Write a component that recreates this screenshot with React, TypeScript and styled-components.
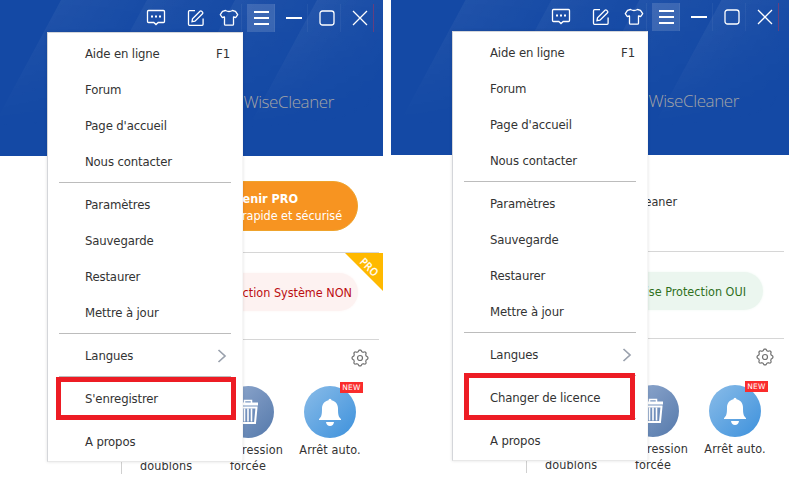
import React from "react";
import styled, { createGlobalStyle } from "styled-components";

const GlobalStyle = createGlobalStyle`
  * {
    box-sizing: border-box;
  }
  body {
    margin: 0;
    background: #fff;
    color: #333;
    font-family: "DejaVu Sans Condensed", "DejaVu Sans", sans-serif;
    font-stretch: condensed;
    font-size: 12.5px;
    overflow: hidden;
  }
`;

const Page = styled.div`
  display: flex;
  gap: 8px;
  width: 790px;
  height: 480px;
  overflow: hidden;
`;

const Window = styled.div<{ $shift?: boolean }>`
  position: relative;
  flex: none;
  width: ${({ $shift }) => ($shift ? 398 : 383)}px;
  height: 480px;
  overflow: hidden;
`;

const Frame = styled.div<{ $shift?: boolean }>`
  position: relative;
  width: 383px;
  margin-top: ${({ $shift }) => ($shift ? -1 : 0)}px;
  margin-left: ${({ $shift }) => ($shift ? 14 : 0)}px;
`;

const Banner = styled.div`
  position: relative;
  display: flex;
  flex-direction: column;
  height: 156px;
  margin: 0 -14px;
  padding: 4px 23px 0 14px;
  background: #1449a5;
`;

const Rays = styled.svg`
  position: absolute;
  top: 0;
  left: 0;
`;

const TitleBar = styled.div`
  position: relative;
  display: flex;
  justify-content: flex-end;
  height: 28px;
`;

const TitleButton = styled.div<{
  $width: number;
  $offset?: number;
  $active?: boolean;
  $line?: string;
}>`
  display: flex;
  align-items: center;
  justify-content: center;
  width: ${({ $width }) => $width}px;
  height: 28px;
  padding-left: ${({ $offset }) => $offset || 0}px;
  background: ${({ $active }) => ($active ? "rgba(255,255,255,0.14)" : "none")};
  border-right: 1px solid ${({ $line }) => $line || "transparent"};
`;

const Brand = styled.div`
  position: relative;
  margin: 58px 40px 0 0;
  text-align: right;
  font: 300 17px/23px "Open Sans", sans-serif;
  letter-spacing: -0.4px;
  color: #a3a4a6;
`;

const Body = styled.div`
  display: flex;
  flex-direction: column;
  margin-left: 121px;
  height: 318px;
`;

const Offer = styled.div`
  height: 96px;
  padding: 25px 25px 0 0;
`;

const ProPill = styled.div`
  display: flex;
  flex-direction: column;
  justify-content: center;
  align-items: flex-end;
  height: 50px;
  border: 1px solid #efa32c;
  border-radius: 25px;
  padding: 1px 15px 0 0;
  background: #f79421;
  color: #fff;
  line-height: 17px;
`;

const ProTitle = styled.strong`
  margin-right: 44px;
`;

const ProText = styled.span`
  letter-spacing: -0.05px;
`;

const Edition = styled.div`
  padding: 13px 86px 0 0;
  text-align: right;
  line-height: 17px;
`;

const Protection = styled.div`
  position: relative;
  height: 87px;
  margin-right: 4px;
  padding: 20px 21px 0 0;
  border-top: 1px solid #d6d6d6;
`;

const StatusPill = styled.div<{ $on?: boolean }>`
  height: 38px;
  border-radius: 19px;
  padding-right: ${({ $on }) => ($on ? 17 : 6)}px;
  text-align: right;
  line-height: 39px;
  background: ${({ $on }) => ($on ? "#ebf6ef" : "#fdf2f1")};
  box-shadow: 0 0 3px ${({ $on }) => ($on ? "#f0f9f3" : "#fdf5f4")};
  color: ${({ $on }) => ($on ? "#2f701c" : "#bb0d10")};
`;

const Ribbon = styled.svg`
  position: absolute;
  top: 0;
  right: -4px;
`;

const Tools = styled.div`
  flex: 1;
  border-left: 1px solid #d0d0d0;
`;

const ToolsHead = styled.div`
  display: flex;
  justify-content: flex-end;
  height: 47px;
  margin-right: 4px;
  padding: 9px 10px 0 0;
  border-top: 1px solid #d6d6d6;
`;

const ToolRow = styled.div`
  display: flex;
  justify-content: flex-end;
  padding-right: 12px;
`;

const Tool = styled.div`
  position: relative;
  display: flex;
  flex-direction: column;
  align-items: center;
  width: 82px;
  text-align: center;
  line-height: 16px;
  letter-spacing: 0.12px;
  white-space: pre-line;
`;

const Disc = styled.div<{ $from: string; $to: string }>`
  display: flex;
  align-items: center;
  justify-content: center;
  width: 52px;
  height: 52px;
  margin-bottom: 4px;
  border-radius: 50%;
  background: linear-gradient(135deg, ${({ $from }) => $from}, ${({ $to }) => $to});
`;

const Badge = styled.span`
  position: absolute;
  top: -4px;
  left: 51px;
  width: 23px;
  height: 11px;
  background: #fa2c2c;
  color: #fff;
  font: 7.5px/11px "DejaVu Sans", sans-serif;
  letter-spacing: 0.3px;
`;

const Menu = styled.div`
  position: absolute;
  top: 32px;
  left: 47px;
  width: 196px;
  height: 430px;
  padding-top: 2px;
  border: 1px solid #d4d6da;
  border-right-color: #f6f6f6;
  border-bottom-color: #e8e8e8;
  background: #fff;
  box-shadow: 0 0 3px rgba(0, 0, 0, 0.12);
  font-size: 13px;
  letter-spacing: -0.14px;
`;

const MenuItem = styled.div`
  display: flex;
  align-items: center;
  justify-content: space-between;
  height: 36px;
  padding: 0 12px 0 37px;
`;

const Separator = styled.div`
  height: 1px;
  margin: 3px 11px 3px;
  background: #bcbcbc;
`;

const Highlight = styled.div<{ $shift?: boolean }>`
  position: absolute;
  left: ${({ $shift }) => ($shift ? 59 : 56)}px;
  top: ${({ $shift }) => ($shift ? 374 : 377)}px;
  width: ${({ $shift }) => ($shift ? 171 : 180)}px;
  height: ${({ $shift }) => ($shift ? 47 : 43)}px;
  border: 5px solid #ed1c24;
`;

const Chevron = styled.svg`
  margin: 1px 3px 0 0;
`;

const stroke = { fill: "none", stroke: "#fff", strokeWidth: 1.3 };

const ChatIcon = () => (
  <svg width="20" height="18" {...stroke}>
    <path d="M2.5 1.5h15q1 0 1 1v10q0 1-1 1H12.200l-2.200 2-2.200-2H2.500q-1 0-1-1v-10q0-1 1-1z" />
    <path d="M5 7.500h2M9 7.500h2M13 7.500h2" strokeWidth="2" />
  </svg>
);

const EditIcon = () => (
  <svg width="18" height="18" {...stroke}>
    <path d="M8 1.700H2.500q-1 0-1 1v12.600q0 1 1 1h12.600q1 0 1-1V9.500" />
    <path d="M5 12.700l.5-3 7.500-7.500q.8-.7 1.600 0l.9.900q.8.800 0 1.600L8 12.200z" />
  </svg>
);

const ShirtIcon = () => (
  <svg width="20" height="18" {...stroke} strokeLinejoin="round">
    <path d="M6.500 1.500q3.500 2 7 0l3 .8 2.200 3.400-1.900 2.800-2.300-.6v7.300q0 1-1 1h-7q-1 0-1-1V7.900l-2.300.6-1.900-2.800L3.500 2.300z" />
  </svg>
);

const ForwardIcon = () => (
  <Chevron width="10" height="14" viewBox="0 0 10 14" fill="none" stroke="#9aa1ad" strokeWidth="1.700">
    <path d="M1.500 1l6.500 6-6.500 6" />
  </Chevron>
);

// outline of an 8-lobed cog wheel
const gearPath = Array.from({ length: 64 }, (_, i) => {
  const a = (i / 64) * Math.PI * 2;
  const wave = Math.cos(a * 8);
  const r = 7.2 + Math.max(-0.7, Math.min(0.7, wave * 1.6));
  return `${i ? "L" : "M"}${(9 + r * Math.cos(a)).toFixed(2)} ${(9 + r * Math.sin(a)).toFixed(2)}`;
}).join("");

const GearIcon = () => (
  <svg width="18" height="18" fill="none" stroke="#707070" strokeWidth="1.200">
    <path d={gearPath + "z"} />
    <circle cx="9" cy="9" r="2.500" />
  </svg>
);

const TrashIcon = () => (
  <svg width="24" height="26" viewBox="0 0 24 26" fill="none" stroke="#fff">
    <path d="M8.500 4V1.500h7V4" strokeWidth="1.500" />
    <path d="M2 5h20" strokeWidth="3" />
    <path d="M3.500 8.500L5 24h14l1.500-15.500z" strokeWidth="2" />
    <path d="M8.500 9.500v13M12 9.500v13M15.500 9.500v13" strokeWidth="1.600" />
  </svg>
);

const BellIcon = () => (
  <svg width="24" height="28" viewBox="0 0 24 28" fill="#fff">
    <path d="M10.500 2.200a1.500 1.500 0 0 1 3 0C18 3.300 20 6.500 20 10.500c0 6 .5 8.500 3 10.500v1H1v-1c2.500-2 3-4.500 3-10.500 0-4 2-7.200 6.500-8.300z" />
    <path d="M8 24h8q-.6 4-4 4t-4-4z" />
  </svg>
);

// x of each slanted ray at the top edge, and how strong its leading edge is
const rays = [
  { x: 61, opacity: 0.055 },
  { x: 147, opacity: 0.045 },
  { x: 235, opacity: 0.05 },
  { x: 317, opacity: 0.06 },
];

interface RaysProps {
  id: string;
}
const BannerRays: React.FC<RaysProps> = ({ id }) => (
  <Rays width="411" height="156" viewBox="-14 0 411 156">
    <defs>
      <linearGradient id={`${id}-fall`} x1="0" y1="0" x2="0" y2="130" gradientUnits="userSpaceOnUse">
        <stop offset="0" stopColor="#fff" />
        <stop offset="1" stopColor="#fff" stopOpacity="0" />
      </linearGradient>
      <mask id={`${id}-mask`} maskUnits="userSpaceOnUse" x="-14" y="0" width="411" height="156">
        <rect x="-14" width="411" height="156" fill={`url(#${id}-fall)`} />
      </mask>
      {rays.map(({ x, opacity }, i) => (
        <linearGradient
          key={x}
          id={`${id}-${i}`}
          x1={x}
          y1="0"
          x2={x + 100}
          y2="54"
          gradientUnits="userSpaceOnUse"
        >
          <stop offset="0" stopColor="#fff" stopOpacity={opacity} />
          <stop offset="1" stopColor="#fff" stopOpacity="0" />
        </linearGradient>
      ))}
    </defs>
    <g mask={`url(#${id}-mask)`}>
      {rays.map(({ x }, i) => (
        <path key={x} d={`M${x} 0h160l-70 130h-160z`} fill={`url(#${id}-${i})`} />
      ))}
    </g>
  </Rays>
);

interface AppWindowProps {
  id: string;
  licensed?: boolean;
  registerLabel: string;
}
const AppWindow: React.FC<AppWindowProps> = ({ id, licensed, registerLabel }) => (
  <Window $shift={licensed}>
    <Frame $shift={licensed}>
      <Banner>
        <BannerRays id={id} />
        <TitleBar>
          <TitleButton $width={40}>
            <ChatIcon />
          </TitleButton>
          <TitleButton $width={40}>
            <EditIcon />
          </TitleButton>
          <TitleButton $width={26} $line="rgba(255,255,255,0.06)">
            <ShirtIcon />
          </TitleButton>
          <TitleButton $width={5} />
          <TitleButton $width={28} $active $line="rgba(255,255,255,0.06)">
            <svg width="16" height="16" stroke="#fff" strokeWidth="2">
              <path d="M1 2h15M1 8h15M1 14h15" />
            </svg>
          </TitleButton>
          <TitleButton $width={33} $offset={6} $line="rgba(255,255,255,0.05)">
            <svg width="16" height="16" stroke="#fff" strokeWidth="2">
              <path d="M0 8h16" />
            </svg>
          </TitleButton>
          <TitleButton $width={33} $offset={6} $line="rgba(255,255,255,0.05)">
            <svg width="16" height="16" {...stroke}>
              <rect x="1" y="1" width="14" height="14" rx="2.500" />
            </svg>
          </TitleButton>
          <TitleButton $width={33} $offset={6} $line="#633f80">
            <svg width="16" height="16" {...stroke}>
              <path d="M1 1l14 14M15 1L1 15" />
            </svg>
          </TitleButton>
        </TitleBar>
        <Brand>WiseCleaner</Brand>
      </Banner>
      <Body>
        <Offer>
          {licensed ? (
            <Edition>WiseCleaner</Edition>
          ) : (
            <ProPill>
              <ProTitle>Devenir PRO</ProTitle>
              <ProText>rapide et sécurisé</ProText>
            </ProPill>
          )}
        </Offer>
        <Protection>
          <StatusPill $on={licensed}>
            {licensed ? "Wise Protection OUI" : "Protection Système NON"}
          </StatusPill>
          {!licensed && (
            <Ribbon width="38" height="38">
              <path d="M0 0h38v38z" fill="#ffb900" />
              <text
                x="24.500"
                y="14"
                transform="rotate(45 24.500 14)"
                textAnchor="middle"
                dominantBaseline="central"
                fill="#fff"
                stroke="#fff"
                strokeWidth="0.300"
                fontFamily="DejaVu Sans"
                fontSize="10.500"
                letterSpacing="0.400"
              >
                PRO
              </text>
            </Ribbon>
          )}
        </Protection>
        <Tools>
          <ToolsHead>
            <GearIcon />
          </ToolsHead>
          <ToolRow>
            <Tool>
              <Disc $from="#8aa6cc" $to="#5b80b0" />
              {"\u00a0\ndoublons"}
            </Tool>
            <Tool>
              <Disc $from="#93abd0" $to="#5579ab">
                <TrashIcon />
              </Disc>
              {"Suppression\nforcée"}
            </Tool>
            <Tool>
              <Disc $from="#8abce8" $to="#3d91dc">
                <BellIcon />
              </Disc>
              <Badge>NEW</Badge>
              Arrêt auto.
            </Tool>
          </ToolRow>
        </Tools>
      </Body>
      <Menu>
        <MenuItem>
          Aide en ligne <span>F1</span>
        </MenuItem>
        <MenuItem>Forum</MenuItem>
        <MenuItem>Page d'accueil</MenuItem>
        <MenuItem>Nous contacter</MenuItem>
        <Separator />
        <MenuItem>Paramètres</MenuItem>
        <MenuItem>Sauvegarde</MenuItem>
        <MenuItem>Restaurer</MenuItem>
        <MenuItem>Mettre à jour</MenuItem>
        <Separator />
        <MenuItem>
          Langues <ForwardIcon />
        </MenuItem>
        <Separator />
        <MenuItem>{registerLabel}</MenuItem>
        <Separator />
        <MenuItem>A propos</MenuItem>
      </Menu>
      <Highlight $shift={licensed} />
    </Frame>
  </Window>
);

export default function App() {
  return (
    <Page>
      <GlobalStyle />
      <AppWindow id="rays-free" registerLabel="S'enregistrer" />
      <AppWindow id="rays-pro" licensed registerLabel="Changer de licence" />
    </Page>
  );
}
